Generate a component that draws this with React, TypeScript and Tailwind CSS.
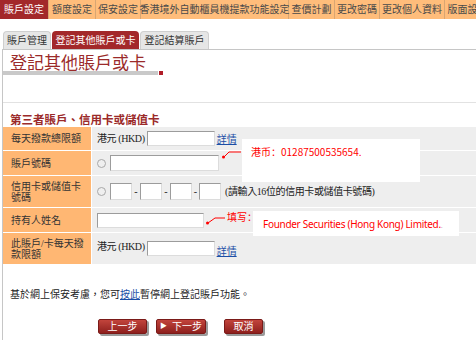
import React from "react";

const navTabs = [
  { label: "賬戶設定", w: "w-[49px]", active: true },
  { label: "額度設定", w: "w-[47px]" },
  { label: "保安設定", w: "w-[45px]" },
  { label: "香港境外自動櫃員機提款功能設定", w: "w-[148px]" },
  { label: "查價計劃", w: "w-[46px]" },
  { label: "更改密碼", w: "w-[45px]" },
  { label: "更改個人資料", w: "w-[65px]" },
  { label: "版面設定", w: "w-[46px]" },
];

function TextBox({ className }: { className: string }) {
  return (
    <span
      className={
        "block flex-none bg-white border-t border-l border-t-[#9c9c9c] border-l-[#9c9c9c] border-b border-r border-b-[#dcdcdc] border-r-[#dcdcdc] " +
        className
      }
    />
  );
}

function Radio() {
  return (
    <span className="block flex-none w-[9px] h-[9px] rounded-full border border-[#a8a8a8] bg-[#efefef]" />
  );
}

function Row({ label, h, children }: { label: React.ReactNode; h: string; children: React.ReactNode }) {
  return (
    <>
      <div className={"bg-[#ffb773] pl-[8px] flex items-center text-[10px] leading-[11px] text-[#333] " + h}>
        <div>{label}</div>
      </div>
      <div className={"bg-[#eeeeee] pl-[5px] flex items-center text-[10px] leading-[12px] text-[#222] whitespace-nowrap " + h}>
        {children}
      </div>
    </>
  );
}

function Btn({ children, className }: { children: React.ReactNode; className: string }) {
  return (
    <div
      className={
        "h-[15px] flex items-center justify-center text-white text-[10px] bg-gradient-to-b from-[#c2443c] to-[#8e1f1d] border border-[#7a1a18] rounded-[2px] shadow-[2px_2px_0_#9a9a9a] " +
        className
      }
    >
      {children}
    </div>
  );
}

export default function App() {
  return (
    <div className="relative w-[476px] h-[340px] overflow-hidden bg-white font-['Liberation_Serif','Noto_Sans_CJK_TC',serif]">
      {/* top menu */}
      <div className="flex h-[19px] bg-[#ffbd7b] whitespace-nowrap overflow-hidden">
        {navTabs.map((t) => (
          <div
            key={t.label}
            className={
              "flex-none flex items-center justify-center text-[10px] border-r border-[#d8a673] " +
              t.w +
              (t.active ? " bg-[#a3282a] text-white" : " text-[#4a4a4a]")
            }
          >
            {t.label}
          </div>
        ))}
      </div>

      {/* sub tabs */}
      <div className="flex items-end mt-[12px] pl-[3px] h-[18px]">
        <div className="w-[48px] h-[18px] flex items-center justify-center text-[10px] text-[#333] bg-[#e6e6e6] border border-b-0 border-[#cfcfcf] rounded-t-[4px]">
          賬戶管理
        </div>
        <div className="ml-[1px] w-[87px] h-[18px] flex items-center justify-center text-[10px] text-white bg-[#a3282a] rounded-t-[4px]">
          登記其他賬戶或卡
        </div>
        <div className="ml-[1px] w-[69px] h-[18px] flex items-center justify-center text-[10px] text-[#333] bg-[#e6e6e6] border border-b-0 border-[#cfcfcf] rounded-t-[4px]">
          登記結算賬戶
        </div>
      </div>

      {/* content */}
      <div className="ml-[2px] border-l border-t border-[#c6c6c6] h-[300px]">
        <div className="pt-[5px] pl-[7px] text-[17px] leading-[18px] text-[#9b2a2a]">
          登記其他賬戶或卡
        </div>
        <div className="flex items-end mt-[-2px]">
          <div className="w-[155px] h-[4px] bg-[#c9c9c9]" />
          <div className="ml-[1px] w-[4px] h-[4px] bg-[#b01c28]" />
        </div>

        <div className="mt-[27px] border-t border-[#e2e2e2]" />

        <div className="pt-[10px] pl-[7px] text-[11.5px] leading-[14px] font-bold text-[#9b2a2a]">
          第三者賬戶、信用卡或儲值卡
        </div>

        <div className="grid grid-cols-[88px_1fr] gap-[1px] bg-white">
          <Row label="每天撥款總限額" h="h-[23px]">
            <span className="tracking-[-0.4px]">港元 (HKD)</span>
            <TextBox className="ml-[2px] w-[68px] h-[15px]" />
            <a className="ml-[2px] mt-[3px] text-[#1b4ea6] underline">詳情</a>
          </Row>

          <Row label="賬戶號碼" h="h-[24px]">
            <Radio />
            <TextBox className="ml-[4px] w-[109px] h-[16px]" />
          </Row>

          <Row
            label={
              <>
                信用卡或儲值卡
                <br />
                號碼
              </>
            }
            h="h-[31px]"
          >
            <Radio />
            <TextBox className="ml-[4px] w-[22px] h-[17px]" />
            <span className="w-[8px] text-center">-</span>
            <TextBox className="w-[22px] h-[17px]" />
            <span className="w-[8px] text-center">-</span>
            <TextBox className="w-[22px] h-[17px]" />
            <span className="w-[7px] text-center">-</span>
            <TextBox className="w-[22px] h-[17px]" />
            <span className="ml-[4px] tracking-[-0.4px]">(請輸入16位的信用卡或儲值卡號碼)</span>
          </Row>

          <Row label="持有人姓名" h="h-[24px]">
            <TextBox className="w-[107px] h-[15px]" />
          </Row>

          <Row
            label={
              <>
                此賬戶/卡每天撥
                <br />
                款限額
              </>
            }
            h="h-[31px]"
          >
            <span className="tracking-[-0.4px] mt-[-4px]">港元 (HKD)</span>
            <TextBox className="ml-[2px] w-[68px] h-[15px]" />
            <a className="ml-[2px] mt-[6px] text-[#1b4ea6] underline">詳情</a>
          </Row>
        </div>

        <div className="mt-[24px] pl-[7px] text-[10px] leading-[14px] text-[#222]">
          基於網上保安考慮，您可<a className="text-[#1b4ea6] underline">按此</a>暫停網上登記賬戶功能。
        </div>

        <div className="mt-[17px] ml-[95px] flex">
          <Btn className="w-[49px]">上一步</Btn>
          <Btn className="ml-[9px] w-[50px]">
            <span className="text-[7px] mr-[5px]">▶</span>下一步
          </Btn>
          <Btn className="ml-[18px] w-[39px]">取消</Btn>
        </div>
      </div>

      {/* annotations */}
      <svg className="absolute left-0 top-0" width="476" height="340">
        <circle cx="223.5" cy="157" r="1.5" fill="#ff0000" />
        <polyline points="224,157 229,152 241,152" fill="none" stroke="#ff0000" strokeWidth="1" />
        <circle cx="207.5" cy="223" r="1.5" fill="#ff0000" />
        <polyline points="208,223 215,218 225,218" fill="none" stroke="#ff0000" strokeWidth="1" />
      </svg>
      <div className="absolute left-[242px] top-[139px] w-[178px] h-[43px] bg-white pl-[9px] pt-[6px] text-[10px] leading-[14px] text-[#ff0000] font-['Noto_Sans_CJK_SC',sans-serif]">
        港币：01287500535654.
      </div>
      <div className="absolute left-[227px] top-[211px] text-[10px] leading-[12px] text-[#ff0000] font-['Noto_Sans_CJK_SC',sans-serif]">
        填写：
      </div>
      <div className="absolute left-[253px] top-[211px] w-[206px] h-[25px] bg-white pl-[10px] pt-[7px] text-[10px] leading-[13px] text-[#ff0000] font-['Noto_Sans',sans-serif] tracking-[-0.3px] whitespace-nowrap">
        Founder Securities (Hong Kong) Limited.<span className="text-[#bbb] text-[7px]">.</span>
      </div>
    </div>
  );
}
